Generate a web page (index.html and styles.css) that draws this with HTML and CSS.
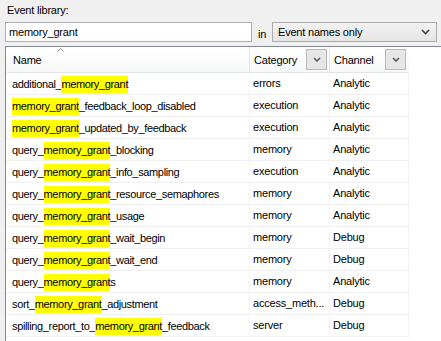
FILE: index.html
```html
<!DOCTYPE html>
<html lang="en">
<head>
  <meta charset="UTF-8" />
  <title>Event library</title>
  <link rel="stylesheet" href="styles.css">
</head>
<body>

<!-- Search -->
<div class="lib-label">Event library:</div>
<div class="search-row">
  <div class="search-box">memory_grant</div>
  <span class="in-label">in</span>
  <div class="scope-select">
    <span>Event names only</span>
    <svg width="9" height="6" viewBox="0 0 9 6"><path d="M1 1 L4.5 4.5 L8 1" fill="none" stroke="#404040" stroke-width="1.6"/></svg>
  </div>
</div>

<!-- Event list -->
<div class="list">
  <div class="list-head">
    <div class="col-name">Name
      <svg class="sort-arrow" width="7" height="4" viewBox="0 0 7 4"><path d="M0.5 3.5 L3.5 0.5 L6.5 3.5" fill="none" stroke="#8a8a8a" stroke-width="1"/></svg>
    </div>
    <div class="col-cat">Category <span class="filter-btn"><svg width="8" height="5" viewBox="0 0 8 5"><path d="M1 1 L4 4 L7 1" fill="none" stroke="#555" stroke-width="1.5"/></svg></span></div>
    <div class="col-chan">Channel <span class="filter-btn"><svg width="8" height="5" viewBox="0 0 8 5"><path d="M1 1 L4 4 L7 1" fill="none" stroke="#555" stroke-width="1.5"/></svg></span></div>
  </div>
  <div id="rows"></div>
</div>

<script>
  const events = [
    ["additional_", "memory_grant", "", "errors", "Analytic"],
    ["", "memory_grant", "_feedback_loop_disabled", "execution", "Analytic"],
    ["", "memory_grant", "_updated_by_feedback", "execution", "Analytic"],
    ["query_", "memory_grant", "_blocking", "memory", "Analytic"],
    ["query_", "memory_grant", "_info_sampling", "execution", "Analytic"],
    ["query_", "memory_grant", "_resource_semaphores", "memory", "Analytic"],
    ["query_", "memory_grant", "_usage", "memory", "Analytic"],
    ["query_", "memory_grant", "_wait_begin", "memory", "Debug"],
    ["query_", "memory_grant", "_wait_end", "memory", "Debug"],
    ["query_", "memory_grant", "s", "memory", "Analytic"],
    ["sort_", "memory_grant", "_adjustment", "access_meth...", "Debug"],
    ["spilling_report_to_", "memory_grant", "_feedback", "server", "Debug"]
  ];

  const rows = document.getElementById("rows");
  events.forEach(ev => {
    const row = document.createElement("div");
    row.className = "row";
    row.innerHTML = `
      <div class="col-name">${ev[0]}<mark>${ev[1]}</mark>${ev[2]}</div>
      <div class="col-cat">${ev[3]}</div>
      <div class="col-chan">${ev[4]}</div>
    `;
    rows.appendChild(row);
  });
</script>
</body>
</html>
```

FILE: styles.css
```css
body { background:#f0f0f0; color:#000; font-family:"Liberation Sans", Arial, sans-serif; font-size:11px; letter-spacing:-0.2px; margin:0; overflow:hidden; }

.lib-label { padding:4px 0 0 7px; height:18px; line-height:13px; }

.search-row { display:flex; align-items:center; height:20px; margin-left:5px; }
.search-box { width:242px; height:18px; line-height:18px; background:#fff; border:1px solid #abadb3; padding-left:3px; }
.in-label { width:14px; padding-left:6px; padding-top:4px; }
.scope-select { width:152px; height:18px; display:flex; align-items:center; justify-content:space-between; padding:0 6px 0 5px; border:1px solid #acacac; background:linear-gradient(#f2f2f2, #e5e5e5); }

.list { margin:4px 0 0 5px; width:435px; height:300px; background:#fff; border:1px solid #828790; border-right:none; }
.list-head, .row { display:grid; grid-template-columns:243px 80px 80px; }
.list-head { height:25px; align-items:center; background:linear-gradient(#fff, #f7f8f9); border-bottom:1px solid #e5e5e5; width:403px; }
.list-head .col-name { padding-left:7px; position:relative; }
.sort-arrow { position:absolute; left:51px; top:-6px; }
.list-head .col-cat, .list-head .col-chan { display:flex; align-items:center; padding-left:4px; border-left:1px solid #e5e5e5; height:25px; }
.filter-btn { width:19px; height:19px; margin-left:auto; margin-right:2px; display:flex; align-items:center; justify-content:center; background:#e6e6e6; border:1px solid #b8b8b8; }
.list-head .col-chan .filter-btn { margin-right:3px; }

.row { height:21px; align-items:center; border-bottom:1px solid #f0f0f0; width:403px; }
.row .col-name { padding-left:6px; white-space:nowrap; letter-spacing:-0.35px; }
.row .col-cat { padding-left:3px; height:21px; line-height:21px; border-left:1px solid #f4f4f4; }
.row .col-chan { padding-left:3px; height:21px; line-height:21px; border-left:1px solid #f4f4f4; border-right:1px solid #f4f4f4; }
mark { background:#ffff00; color:#000; padding:2px 0 3px; }
```
